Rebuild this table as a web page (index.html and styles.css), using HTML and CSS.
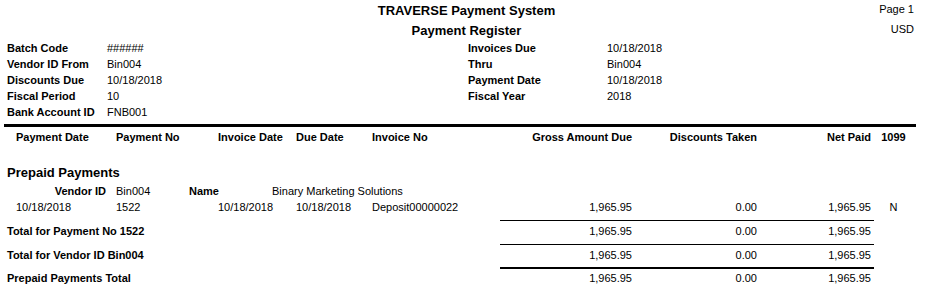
FILE: index.html
```html
<!DOCTYPE html>
<html>
<head>
<meta charset="utf-8">
<title>Payment Register</title>
<link rel="stylesheet" href="styles.css">
</head>
<body>
<div class="report">
  <header class="head">
    <div class="title-row">
      <div></div>
      <div class="title">TRAVERSE Payment System</div>
      <div class="meta meta-page">Page 1</div>
    </div>
    <div class="sub-row">
      <div></div>
      <div class="subtitle">Payment Register</div>
      <div class="meta meta-cur">USD</div>
    </div>
  </header>

  <section class="fields">
    <div class="lbl">Batch Code</div><div class="val">######</div>
    <div class="lbl">Invoices Due</div><div class="val">10/18/2018</div>
    <div class="lbl">Vendor ID From</div><div class="val">Bin004</div>
    <div class="lbl">Thru</div><div class="val">Bin004</div>
    <div class="lbl">Discounts Due</div><div class="val">10/18/2018</div>
    <div class="lbl">Payment Date</div><div class="val">10/18/2018</div>
    <div class="lbl">Fiscal Period</div><div class="val">10</div>
    <div class="lbl">Fiscal Year</div><div class="val">2018</div>
    <div class="lbl">Bank Account ID</div><div class="val">FNB001</div>
  </section>

  <div class="heavy-rule"></div>

  <div class="grid colhead">
    <div class="c-pd">Payment Date</div>
    <div>Payment No</div>
    <div>Invoice Date</div>
    <div>Due Date</div>
    <div>Invoice No</div>
    <div class="num">Gross Amount Due</div>
    <div class="num">Discounts Taken</div>
    <div class="num">Net Paid</div>
    <div class="ctr">1099</div>
  </div>

  <div class="group-title">Prepaid Payments</div>

  <div class="vendor-row">
    <div class="v-lbl">Vendor ID</div>
    <div class="v-id">Bin004</div>
    <div class="v-lbl2">Name</div>
    <div>Binary Marketing Solutions</div>
  </div>

  <div class="grid data-row">
    <div class="c-pd">10/18/2018</div>
    <div>1522</div>
    <div>10/18/2018</div>
    <div>10/18/2018</div>
    <div>Deposit00000022</div>
    <div class="num">1,965.95</div>
    <div class="num">0.00</div>
    <div class="num">1,965.95</div>
    <div class="ctr">N</div>
  </div>

  <div class="rule"></div>
  <div class="grid total-row">
    <div class="t-lbl">Total for Payment No 1522</div>
    <div class="num">1,965.95</div>
    <div class="num">0.00</div>
    <div class="num">1,965.95</div>
  </div>

  <div class="rule"></div>
  <div class="grid total-row">
    <div class="t-lbl">Total for Vendor ID Bin004</div>
    <div class="num">1,965.95</div>
    <div class="num">0.00</div>
    <div class="num">1,965.95</div>
  </div>

  <div class="rule rule-thick"></div>
  <div class="grid total-row total-last">
    <div class="t-lbl">Prepaid Payments Total</div>
    <div class="num">1,965.95</div>
    <div class="num">0.00</div>
    <div class="num">1,965.95</div>
  </div>
</div>
</body>
</html>
```

FILE: styles.css
```css
html, body {
  margin: 0;
  padding: 0;
  background: #ffffff;
}

body {
  font-family: "Liberation Sans", Arial, sans-serif;
  font-size: 11px;
  color: #000000;
  width: 933px;
  height: 287px;
  overflow: hidden;
}

.report {
  width: 933px;
}

/* ---------- header ---------- */
.head {
  padding-top: 1px;
}

.title-row,
.sub-row {
  display: grid;
  grid-template-columns: 1fr auto 1fr;
  align-items: start;
}

.title-row {
  line-height: 20px;
}

.sub-row {
  margin-top: 1px;
  line-height: 18px;
}

.title,
.subtitle {
  font-size: 13px;
  font-weight: bold;
  text-align: center;
}

.meta {
  text-align: right;
  padding-right: 19px;
}

.meta-page {
  line-height: 17px;
}

.meta-cur {
  line-height: 14px;
}

/* ---------- selection fields ---------- */
.fields {
  display: grid;
  grid-template-columns: 100px 361px 139px 1fr;
  grid-auto-rows: 16px;
  line-height: 16px;
  padding-left: 7px;
}

.lbl {
  font-weight: bold;
}

.heavy-rule {
  margin: 4px 0 0 4px;
  width: 912px;
  height: 3px;
  background: #000000;
}

/* ---------- tabular grid ---------- */
.grid {
  display: grid;
  grid-template-columns: 16px 100px 102px 78px 76px 148px 112px 125px 114px 45px;
  line-height: 16px;
  white-space: nowrap;
}

.c-pd {
  grid-column: 2;
}

.num {
  text-align: right;
}

.ctr {
  text-align: center;
}

.colhead {
  margin-top: 2px;
  font-weight: bold;
}

.group-title {
  margin-top: 18px;
  padding-left: 7px;
  font-size: 13px;
  font-weight: bold;
  line-height: 20px;
}

.vendor-row {
  display: grid;
  grid-template-columns: 106px 83px 83px 1fr;
  line-height: 16px;
  white-space: nowrap;
}

.v-lbl {
  font-weight: bold;
  text-align: right;
}

.v-id {
  padding-left: 10px;
}

.v-lbl2 {
  font-weight: bold;
}

.rule {
  margin-top: 5px;
  margin-left: 500px;
  width: 374px;
  height: 1px;
  background: #000000;
}

.rule-thick {
  margin-top: 4px;
  height: 2px;
}

.total-row {
  margin-top: 2px;
}

.total-last {
  margin-top: 1px;
}

.t-lbl {
  grid-column: 1 / 7;
  padding-left: 7px;
  font-weight: bold;
}
```
